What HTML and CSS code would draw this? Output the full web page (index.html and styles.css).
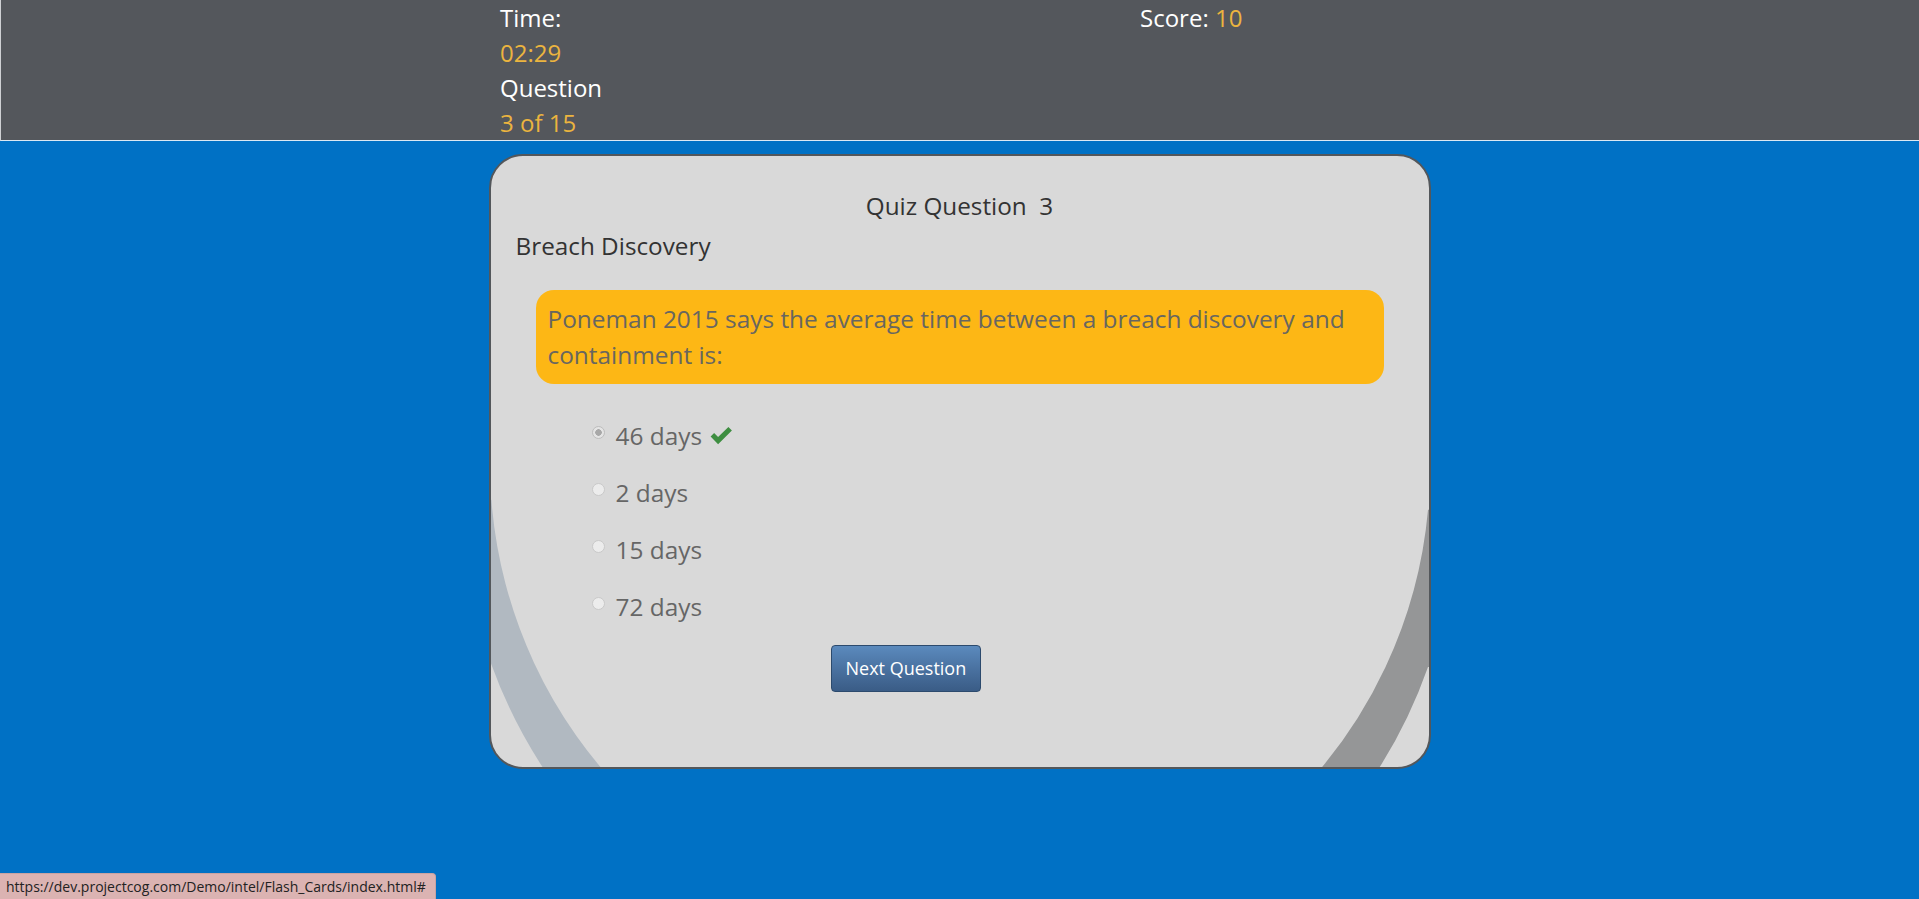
FILE: index.html
```html
<!DOCTYPE html>
<html lang="en">
<head>
<meta charset="utf-8">
<title>Flash Cards Quiz</title>
<link rel="stylesheet" href="styles.css">
</head>
<body>
<header class="topbar">
  <div class="topbar-inner">
    <div class="col-left">
      <div class="hd-label">Time:</div>
      <div class="hd-value">02:29</div>
      <div class="hd-label">Question</div>
      <div class="hd-value">3 of 15</div>
    </div>
    <div class="col-right">
      <span class="hd-label">Score:</span> <span class="hd-value">10</span>
    </div>
  </div>
</header>

<main class="stage">
  <section class="card">
    <svg class="card-arcs" viewBox="491 156 938 611" preserveAspectRatio="none" aria-hidden="true">
      <path fill="#b1b9c1" d="M470 490 L491.4 500 A471 471 0 0 0 631 800 L566 800 A500 500 0 0 1 490.8 663 L470 663 Z"/>
      <path fill="#959697" d="M1450 500 L1428 510 A469 469 0 0 1 1292 800 L1357 800 A494 494 0 0 0 1428 667 L1450 667 Z"/>
    </svg>
    <div class="card-body">
      <h2 class="quiz-title">Quiz Question&nbsp; 3</h2>
      <h3 class="topic">Breach Discovery</h3>
      <div class="prompt">Poneman 2015 says the average time between a breach discovery and containment is:</div>
      <div class="options">
        <label class="option">
          <input class="radio" type="radio" name="answer" checked disabled>
          <span class="opt-text">46 days <svg class="check" width="24" height="19" viewBox="0 0 24 19" aria-hidden="true"><path d="M1.6 10.6 L5.1 7.1 L9.1 11.1 L19.4 0.9 L22.9 4.4 L9.1 18.2 Z" fill="#3e8e41"/></svg></span>
        </label>
        <label class="option">
          <input class="radio" type="radio" name="answer" disabled>
          <span class="opt-text">2 days</span>
        </label>
        <label class="option">
          <input class="radio" type="radio" name="answer" disabled>
          <span class="opt-text">15 days</span>
        </label>
        <label class="option">
          <input class="radio" type="radio" name="answer" disabled>
          <span class="opt-text">72 days</span>
        </label>
      </div>
      <div class="actions">
        <button class="btn-next" type="button">Next Question</button>
      </div>
    </div>
  </section>
</main>

<div class="status-bubble">https://dev.projectcog.com/Demo/intel/Flash_Cards/index.html#</div>
</body>
</html>
```

FILE: styles.css
```css
* {
  box-sizing: border-box;
}

html, body {
  margin: 0;
  padding: 0;
}

body {
  background: #0071c5;
  font-family: "Open Sans", "Noto Sans", "Liberation Sans", sans-serif;
  min-height: 899px;
}

/* ---------- Top bar ---------- */
.topbar {
  background: #54575c;
  border-left: 1px solid #cfd1d4;
  border-bottom: 1px solid #dce9f4;
  height: 141px;
}

.topbar-inner {
  width: 940px;
  margin: 0 auto;
  display: grid;
  grid-template-columns: 640px 300px;
  font-size: 24px;
  line-height: 35px;
}

.col-left,
.col-right {
  padding-left: 10px;
}

.hd-label {
  color: #ffffff;
}

.hd-value {
  color: #ebb43f;
}

/* ---------- Card ---------- */
.stage {
  padding-top: 13px;
}

.card {
  position: relative;
  width: 942px;
  margin: 0 auto;
  background: #d9d9d9;
  border: 2px solid #53575b;
  border-radius: 34px;
  overflow: hidden;
}

.card-arcs {
  position: absolute;
  left: 0;
  top: 0;
  width: 100%;
  height: 100%;
  z-index: 0;
}

.card-body {
  position: relative;
  z-index: 1;
  padding: 32px 25px 75px;
}

.quiz-title {
  margin: 0;
  font-size: 24.3px;
  font-weight: 400;
  line-height: 36px;
  color: #333333;
  text-align: center;
}

.topic {
  margin: 4px 0 0;
  font-size: 24.3px;
  font-weight: 400;
  line-height: 36px;
  color: #333333;
}

.prompt {
  margin: 26px 20px 0;
  padding: 11px 12px;
  background: #fdb715;
  border-radius: 18px;
  font-size: 24.4px;
  line-height: 36px;
  color: #686660;
}

/* ---------- Options ---------- */
.options {
  margin-top: 34px;
  padding-left: 76px;
  display: flex;
  flex-direction: column;
  gap: 21px;
}

.option {
  display: flex;
  align-items: flex-start;
  font-size: 24.4px;
  line-height: 36px;
  color: #666666;
}

.radio {
  appearance: none;
  -webkit-appearance: none;
  width: 13px;
  height: 13px;
  margin: 8px 11px 0 0;
  border-radius: 50%;
  border: 1px solid #c9c9c9;
  background: #ececec;
  flex: none;
}

.radio:checked {
  background: radial-gradient(circle, #a8a8a8 0 3px, #e4e4e4 3.5px);
  border-color: #bdbdbd;
}

.check {
  vertical-align: baseline;
  margin-left: 1px;
}

/* ---------- Button ---------- */
.actions {
  margin-top: 20px;
  padding-left: 315px;
}

.btn-next {
  font-family: "Open Sans", "Noto Sans", "Liberation Sans", sans-serif;
  font-size: 18px;
  line-height: 25px;
  padding: 10px 14px;
  color: #ffffff;
  background: linear-gradient(to bottom, #5b8abd 0%, #4a72a1 50%, #3a5c86 100%);
  border: 1px solid #2c4a6d;
  border-radius: 4px;
  cursor: pointer;
}

/* ---------- Status bubble ---------- */
.status-bubble {
  position: fixed;
  left: 0;
  bottom: 0;
  height: 26px;
  padding: 0 9px 0 6px;
  background: #dbb3b2;
  border-top: 1px solid #c9a3a2;
  border-right: 1px solid #c9a3a2;
  border-top-right-radius: 4px;
  font-family: "Open Sans", "Noto Sans", "Liberation Sans", sans-serif;
  font-size: 14px;
  line-height: 25px;
  color: #222222;
  white-space: nowrap;
}
```
